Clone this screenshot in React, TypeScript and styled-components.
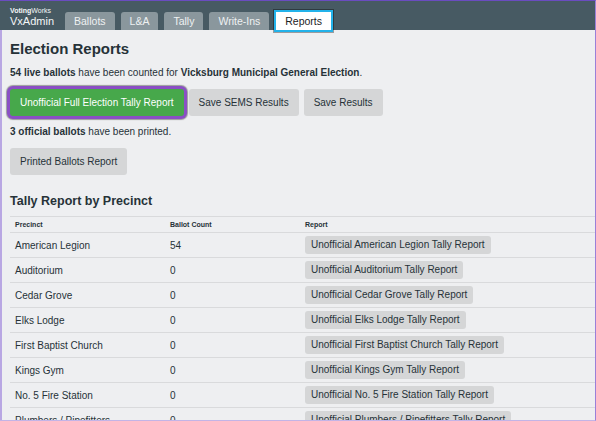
import React from "react";
import styled, { createGlobalStyle } from "styled-components";

const Global = createGlobalStyle`
  html, body { margin: 0; padding: 0; background: #eeeff1; }
  body { font-family: "Liberation Sans", Arial, sans-serif; color: #263238; }
  * { box-sizing: border-box; }
`;

const Frame = styled.div`
  width: 596px;
  height: 421px;
  overflow: hidden;
  border-top: 1px solid #6a4cc0;
  border-right: 1px solid #9a80d8;
  border-bottom: 1px solid #c3b4e6;
  display: flex;
  flex-direction: column;
  background: #eeeff1;
`;

const Header = styled.header`
  background: #475a63;
  height: 29px;
  display: flex;
  align-items: flex-end;
  padding-left: 10px;
  flex-shrink: 0;
`;

const Brand = styled.div`
  display: flex;
  flex-direction: column;
  align-self: stretch;
  justify-content: center;
  color: #f4f6f7;
  margin-right: 11px;
  padding-top: 2px;
`;

const BrandSmall = styled.span`
  font-size: 7px;
  line-height: 8px;
  b { font-weight: 700; }
`;

const BrandName = styled.span`
  font-size: 11px;
  line-height: 12px;
`;

const Tabs = styled.nav`
  display: flex;
  gap: 6px;
  align-items: flex-end;
`;

const Tab = styled.span<{ $active?: boolean }>`
  height: 18px;
  display: flex;
  align-items: center;
  padding: 0 9px;
  font-size: 10.5px;
  border-radius: 3px 3px 0 0;
  background: ${(p) => (p.$active ? "#ffffff" : "#8a979d")};
  color: ${(p) => (p.$active ? "#1c2326" : "#eef1f2")};
  ${(p) =>
    p.$active &&
    `outline: 2px solid #22b2ea; outline-offset: 0px; box-shadow: 0 0 0 3px rgba(0,0,0,0.35); border-radius: 0; margin-left: 1px;`}
`;

const Main = styled.main`
  flex: 1;
  border-left: 2px solid #b9a7e3;
  padding: 10px 0 0 8px;
  overflow: hidden;
`;

const Title = styled.h1`
  font-size: 15px;
  line-height: 18px;
  font-weight: 700;
  margin: 0 0 9px;
`;

const Text = styled.p`
  font-size: 10px;
  line-height: 12px;
  margin: 0;
  b { font-weight: 700; }
`;

const ButtonRow = styled.div`
  display: flex;
  gap: 5px;
  margin: 10px 0 10px;
`;

const Button = styled.button<{ $primary?: boolean; $focused?: boolean }>`
  font-family: inherit;
  font-size: 10px;
  line-height: 13px;
  padding: 7px 10px;
  border: none;
  border-radius: 3px;
  background: ${(p) => (p.$primary ? "#47a84b" : "#d5d6d7")};
  color: ${(p) => (p.$primary ? "#ffffff" : "#263238")};
  white-space: nowrap;
  ${(p) =>
    p.$focused &&
    `box-shadow: 0 0 0 3px #8a4fc4, 0 0 1px 4px rgba(0,0,0,0.35);`}
`;

const SubTitle = styled.h2`
  font-size: 12.5px;
  line-height: 14px;
  font-weight: 700;
  margin: 19px 0 8px;
`;

const Table = styled.table`
  border-collapse: collapse;
  width: calc(100% + 2px);
  table-layout: fixed;
`;

const Th = styled.th<{ $w?: number }>`
  text-align: left;
  font-size: 7px;
  font-weight: 700;
  height: 16px;
  padding: 0 5px;
  border-top: 1px solid #d9dadc;
  border-bottom: 1px solid #d9dadc;
  ${(p) => (p.$w ? `width: ${p.$w}px;` : "")}
`;

const Td = styled.td`
  font-size: 10px;
  height: 25px;
  padding: 0 5px;
  border-bottom: 1px solid #d9dadc;
  white-space: nowrap;
`;

const RowButton = styled.button`
  font-family: inherit;
  font-size: 10px;
  line-height: 12px;
  padding: 3px 6px 3px;
  border: none;
  border-radius: 3px;
  background: #d5d6d7;
  color: #263238;
  white-space: nowrap;
`;

const precincts: [string, number][] = [
  ["American Legion", 54],
  ["Auditorium", 0],
  ["Cedar Grove", 0],
  ["Elks Lodge", 0],
  ["First Baptist Church", 0],
  ["Kings Gym", 0],
  ["No. 5 Fire Station", 0],
  ["Plumbers / Pipefitters", 0],
];

export default function App() {
  return (
    <Frame>
      <Global />
      <Header>
        <Brand>
          <BrandSmall>
            <b>Voting</b>Works
          </BrandSmall>
          <BrandName>VxAdmin</BrandName>
        </Brand>
        <Tabs>
          <Tab>Ballots</Tab>
          <Tab>L&amp;A</Tab>
          <Tab>Tally</Tab>
          <Tab>Write-Ins</Tab>
          <Tab $active>Reports</Tab>
        </Tabs>
      </Header>
      <Main>
        <Title>Election Reports</Title>
        <Text>
          <b>54 live ballots</b> have been counted for{" "}
          <b>Vicksburg Municipal General Election</b>.
        </Text>
        <ButtonRow>
          <Button $primary $focused>
            Unofficial Full Election Tally Report
          </Button>
          <Button>Save SEMS Results</Button>
          <Button>Save Results</Button>
        </ButtonRow>
        <Text>
          <b>3 official ballots</b> have been printed.
        </Text>
        <ButtonRow>
          <Button>Printed Ballots Report</Button>
        </ButtonRow>
        <SubTitle>Tally Report by Precinct</SubTitle>
        <Table>
          <thead>
            <tr>
              <Th $w={155}>Precinct</Th>
              <Th $w={135}>Ballot Count</Th>
              <Th>Report</Th>
            </tr>
          </thead>
          <tbody>
            {precincts.map(([name, count]) => (
              <tr key={name}>
                <Td>{name}</Td>
                <Td>{count}</Td>
                <Td>
                  <RowButton>Unofficial {name} Tally Report</RowButton>
                </Td>
              </tr>
            ))}
          </tbody>
        </Table>
      </Main>
    </Frame>
  );
}
